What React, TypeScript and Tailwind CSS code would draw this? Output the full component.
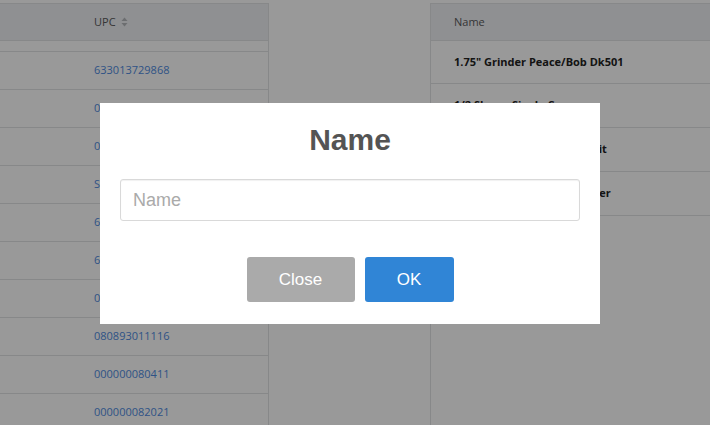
const upcs = [
  "633013729868",
  "028573100254",
  "085731002541",
  "SKU-4471209",
  "633013729875",
  "633013729882",
  "028573100261",
  "080893011116",
  "000000080411",
  "000000082021",
];

const names = [
  '1.75" Grinder Peace/Bob Dk501',
  '1/2 Sleeve Single Crown',
  'Chrome Crusher Grinder Kit',
  '2.5" Zinc Alloy Herbs Grinder',
];

function SortIcon() {
  return (
    <svg width="7" height="10" viewBox="0 0 7 10" className="ml-[5px] inline-block">
      <path d="M3.5 0.5 L6.5 4 H0.5 Z" fill="#b5b7bb" />
      <path d="M3.5 9.5 L6.5 6 H0.5 Z" fill="#b5b7bb" />
    </svg>
  );
}

export default function App() {
  return (
    <div className="relative w-[710px] h-[425px] overflow-hidden bg-white font-['Open_Sans',sans-serif]">
      {/* Page behind the dialog */}
      <div className="flex h-full pt-[3px]">
        {/* Left table */}
        <div className="w-[269px] shrink-0 border-r border-[#e2e3e5] h-full">
          <div className="h-[38px] bg-[#eef0f4] border-y border-[#e2e3e5] flex items-center pl-[94px] text-[11px] text-[#5a5a5a]">
            UPC
            <SortIcon />
          </div>
          <div className="h-[11px] border-b border-[#e2e3e5]" />
          {upcs.map((u) => (
            <div
              key={u}
              className="h-[38px] border-b border-[#e2e3e5] flex items-center pl-[94px] text-[11px] text-[#4f8be0]"
            >
              {u}
            </div>
          ))}
        </div>

        <div className="w-[161px] shrink-0" />

        {/* Right table */}
        <div className="flex-1 border-l border-[#e2e3e5] h-full">
          <div className="h-[38px] bg-[#eef0f4] border-y border-[#e2e3e5] flex items-center pl-[23px] text-[11px] text-[#5a5a5a]">
            Name
          </div>
          {names.map((n, i) => (
            <div
              key={n}
              className={`${i === 0 ? "h-[43px]" : "h-[44px]"} border-b border-[#e2e3e5] flex items-center pl-[23px] text-[11px] font-bold text-[#222]`}
            >
              {n}
            </div>
          ))}
        </div>
      </div>

      {/* Overlay + dialog */}
      <div className="absolute inset-0 bg-black/40 flex items-center justify-center pr-[10px]">
        <div className="w-[500px] h-[221px] bg-white flex flex-col items-center pt-[19px] font-['Liberation_Sans',Arial,sans-serif] translate-y-[1px]">
          <div className="h-[36px] leading-[36px] text-[30px] font-bold text-[#545454]">Name</div>
          <input
            className="mt-[21px] w-[460px] h-[42px] border border-[#d9d9d9] rounded-[3px] px-[12px] text-[18px] text-[#545454] placeholder:text-[#aaaaaa] outline-none shadow-[inset_0_1px_1px_rgba(0,0,0,0.06)]"
            placeholder="Name"
          />
          <div className="mt-[36px] flex gap-[10px]">
            <button className="w-[108px] h-[45px] rounded-[3px] bg-[#aaaaaa] text-white text-[17px]">Close</button>
            <button className="w-[89px] h-[45px] rounded-[3px] bg-[#3085d6] text-white text-[17px]">OK</button>
          </div>
        </div>
      </div>
    </div>
  );
}
